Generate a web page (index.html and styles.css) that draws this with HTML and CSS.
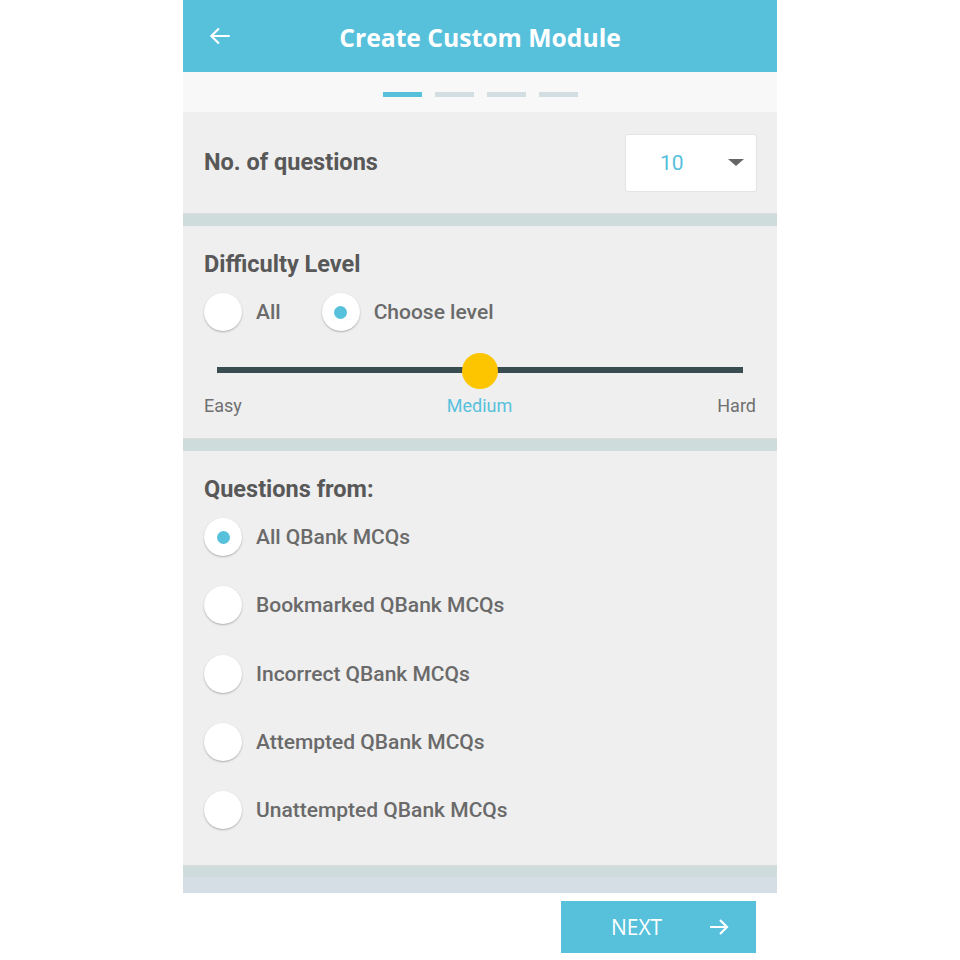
FILE: index.html
```html
<!DOCTYPE html>
<html lang="en">
<head>
    <meta charset="UTF-8">
    <meta name="viewport" content="width=device-width, initial-scale=1.0">
    <title>Create Custom Module</title>
    <link rel="stylesheet" href="styles.css">
</head>
<body>
<div class="screen">
    <!-- Top bar -->
    <div class="topbar">
        <svg class="back" width="26" height="26" viewBox="0 0 24 24">
            <path d="M21 12H5M11 5l-7 7 7 7" fill="none" stroke="#fff" stroke-width="2"/>
        </svg>
        <h1 class="title">Create Custom Module</h1>
    </div>

    <!-- Step indicator -->
    <div class="steps">
        <span class="step active"></span>
        <span class="step"></span>
        <span class="step"></span>
        <span class="step"></span>
    </div>

    <!-- Number of questions -->
    <div class="section count-row">
        <h2 class="heading">No. of questions</h2>
        <div class="select">
            <span class="select-value">10</span>
            <span class="caret"></span>
        </div>
    </div>
    <div class="divider"></div>

    <!-- Difficulty -->
    <div class="section difficulty">
        <h2 class="heading">Difficulty Level</h2>
        <div class="radio-row">
            <label class="radio"><span class="dot"></span><span class="radio-text">All</span></label>
            <label class="radio"><span class="dot checked"></span><span class="radio-text">Choose level</span></label>
        </div>
        <div class="slider">
            <div class="track"></div>
            <div class="thumb"></div>
        </div>
        <div class="levels">
            <span>Easy</span>
            <span class="current">Medium</span>
            <span>Hard</span>
        </div>
    </div>
    <div class="divider"></div>

    <!-- Source -->
    <div class="section source">
        <h2 class="heading">Questions from:</h2>
        <ul class="options">
            <li class="radio"><span class="dot checked"></span><span class="radio-text">All QBank MCQs</span></li>
            <li class="radio"><span class="dot"></span><span class="radio-text">Bookmarked QBank MCQs</span></li>
            <li class="radio"><span class="dot"></span><span class="radio-text">Incorrect QBank MCQs</span></li>
            <li class="radio"><span class="dot"></span><span class="radio-text">Attempted QBank MCQs</span></li>
            <li class="radio"><span class="dot"></span><span class="radio-text">Unattempted QBank MCQs</span></li>
        </ul>
    </div>
    <div class="divider bottom"></div>

    <!-- Footer -->
    <div class="footer">
        <button class="next">
            <span>NEXT</span>
            <svg width="24" height="24" viewBox="0 0 24 24">
                <path d="M3 12h17M13 5l7 7-7 7" fill="none" stroke="#fff" stroke-width="2.2"/>
            </svg>
        </button>
    </div>
</div>
</body>
</html>
```

FILE: styles.css
```css
body {
    margin: 0;
    background: #fff;
    font-family: Roboto, "Liberation Sans", sans-serif;
}
.screen {
    width: 594px;
    margin: 0 auto;
}
.topbar {
    height: 72px;
    background-color: #57c1dc;
    display: flex;
    align-items: center;
    position: relative;
}
.back {
    position: absolute;
    left: 24px;
    top: 23px;
}
.title {
    margin: 0;
    width: 100%;
    text-align: center;
    color: #fff;
    font-family: "Open Sans", sans-serif;
    font-weight: 700;
    font-size: 24.7px;
    padding-top: 2px;
}
.steps {
    height: 40px;
    background: #f8f8f8;
    display: flex;
    justify-content: center;
    align-items: center;
    gap: 13px;
    padding-left: 1px;
}
.step {
    width: 39px;
    height: 5px;
    background: #d3dee3;
    margin-top: 4px;
}
.step.active {
    background: #57c1dc;
}
.section {
    background: #efefef;
    padding: 0 21px;
}
.heading {
    margin: 0;
    font-size: 23.5px;
    font-weight: 700;
    color: #585858;
    line-height: 25px;
}
.count-row {
    height: 101px;
    display: flex;
    align-items: center;
    justify-content: space-between;
    padding-right: 20px;
}
.select {
    width: 130px;
    height: 56px;
    background: #fff;
    border: 1px solid #e4e4e4;
    border-radius: 3px;
    display: flex;
    align-items: center;
    box-sizing: content-box;
}
.select-value {
    color: #57c1dc;
    font-size: 21px;
    margin-left: 34px;
    flex: 1;
}
.caret {
    width: 0;
    height: 0;
    border-left: 8px solid transparent;
    border-right: 8px solid transparent;
    border-top: 7px solid #666;
    margin-right: 12px;
}
.divider {
    height: 12px;
    border-top: 1px solid #dcdcdc;
    background: #cfdcdc;
}
.divider.bottom {
    height: 11px;
    border-bottom: 16px solid #d5dde5;
}
.difficulty {
    padding-top: 26px;
    padding-bottom: 22px;
}
.radio-row {
    display: flex;
    gap: 41px;
    margin-top: 16px;
}
.radio {
    display: flex;
    align-items: center;
    gap: 14px;
}
.dot {
    width: 38px;
    height: 38px;
    border-radius: 50%;
    background: #fff;
    box-shadow: 0 1px 2px rgba(0, 0, 0, 0.28);
    display: flex;
    align-items: center;
    justify-content: center;
}
.dot.checked::after {
    content: "";
    width: 13px;
    height: 13px;
    border-radius: 50%;
    background: #57c1dc;
}
.radio-text {
    font-size: 21px;
    font-weight: 500;
    color: #6a6a6a;
}
.slider {
    height: 36px;
    margin: 21px 13px 0;
    position: relative;
    display: flex;
    align-items: center;
}
.track {
    width: 100%;
    height: 6px;
    background: #394c4f;
}
.thumb {
    position: absolute;
    left: 50%;
    top: 1px;
    width: 36px;
    height: 36px;
    margin-left: -18px;
    border-radius: 50%;
    background: #fcc500;
}
.levels {
    display: flex;
    justify-content: space-between;
    margin-top: 8px;
    font-size: 18px;
    line-height: 20px;
    color: #707070;
}
.levels .current {
    color: #57c1dc;
}
.source {
    padding-top: 26px;
    padding-bottom: 36px;
}
.options {
    list-style: none;
    margin: 16px 0 0;
    padding: 0;
    display: flex;
    flex-direction: column;
    gap: 30.25px;
}
.footer {
    height: 67px;
    display: flex;
    justify-content: flex-end;
    align-items: flex-start;
    padding-right: 21px;
}
.next {
    margin-top: 8px;
    width: 195px;
    height: 52px;
    border: none;
    background: #57c1dc;
    color: #fff;
    font-family: "Open Sans", sans-serif;
    font-size: 21px;
    display: flex;
    align-items: center;
    justify-content: space-between;
    padding: 0 25px 0 50px;
    cursor: pointer;
}
```
